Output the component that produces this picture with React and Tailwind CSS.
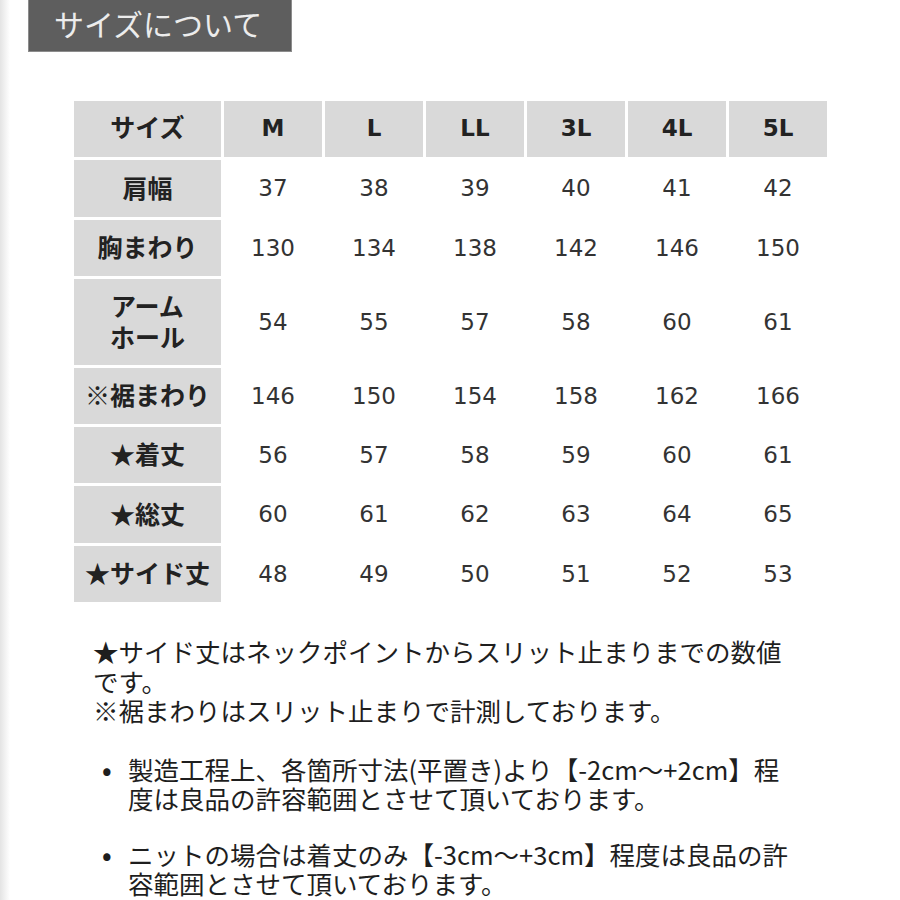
import React from "react";

const sizes = ["M", "L", "LL", "3L", "4L", "5L"];

const rows = [
  { label: ["肩幅"], h: "h-[57px]", vals: [37, 38, 39, 40, 41, 42] },
  { label: ["胸まわり"], h: "h-[56px]", vals: [130, 134, 138, 142, 146, 150] },
  { label: ["アーム", "ホール"], h: "h-[86px]", vals: [54, 55, 57, 58, 60, 61] },
  { label: ["※裾まわり"], h: "h-[56px]", vals: [146, 150, 154, 158, 162, 166] },
  { label: ["★着丈"], h: "h-[56px]", vals: [56, 57, 58, 59, 60, 61] },
  { label: ["★総丈"], h: "h-[57px]", vals: [60, 61, 62, 63, 64, 65] },
  { label: ["★サイド丈"], h: "h-[56px]", vals: [48, 49, 50, 51, 52, 53] },
];

const jp = "font-['Noto_Sans_CJK_JP',sans-serif]";
const num = "font-['DejaVu_Sans','Noto_Sans_CJK_JP',sans-serif]";

export default function App() {
  return (
    <div className="w-[900px] h-[900px] bg-white flex overflow-hidden">
      {/* faint page edge on the left */}
      <div className="w-[10px] shrink-0 bg-gradient-to-r from-[#e4e4e4] to-white" />

      <div className="flex-1 flex flex-col">
        <div className="ml-[18px] w-[264px] h-[52px] bg-[#5e5e5e] border-l border-b border-r border-[#8c8c8c] flex items-center pl-[25px] pb-[5px]">
          <span className={`${jp} text-[30px] text-[#ececec] leading-none`}>サイズについて</span>
        </div>

        {/* size table */}
        <div className="ml-[64px] mt-[49px] grid grid-cols-[147px_repeat(6,98px)] gap-[3px] text-[#222]">
          <div className={`h-[56px] bg-[#d9d9d9] flex items-center justify-center pb-[4px] ${jp} font-bold text-[25px]`}>サイズ</div>
          {sizes.map((s) => (
            <div key={s} className={`h-[56px] bg-[#d9d9d9] flex items-center justify-center pb-[2px] ${num} font-bold text-[23px]`}>
              {s}
            </div>
          ))}

          {rows.map((r) => (
            <React.Fragment key={r.label.join("")}>
              <div className={`${r.h} bg-[#d9d9d9] flex flex-col items-center justify-center pb-[3px] ${jp} font-bold text-[25px] leading-[31px]`}>
                {r.label.map((l) => (
                  <span key={l}>{l}</span>
                ))}
              </div>
              {r.vals.map((v, i) => (
                <div key={i} className={`${r.h} flex items-center justify-center ${num} text-[23px] text-[#333]`}>
                  {v}
                </div>
              ))}
            </React.Fragment>
          ))}
        </div>

        {/* notes */}
        <div className={`ml-[83px] mt-[34px] ${jp} text-[25.5px] leading-[29.5px] text-[#1e1e1e] whitespace-nowrap`}>
          <div>★サイド丈はネックポイントからスリット止まりまでの数値</div>
          <div>です。</div>
          <div>※裾まわりはスリット止まりで計測しております。</div>

          <div className="mt-[29px] flex">
            <span className="w-[35px] shrink-0 pl-[9px] font-bold">•</span>
            <div>
              <div>製造工程上、各箇所寸法(平置き)より【-2cm～+2cm】程</div>
              <div>度は良品の許容範囲とさせて頂いております。</div>
            </div>
          </div>

          <div className="mt-[26px] flex">
            <span className="w-[35px] shrink-0 pl-[9px] font-bold">•</span>
            <div>
              <div>ニットの場合は着丈のみ【-3cm～+3cm】程度は良品の許</div>
              <div>容範囲とさせて頂いております。</div>
            </div>
          </div>
        </div>
      </div>
    </div>
  );
}
